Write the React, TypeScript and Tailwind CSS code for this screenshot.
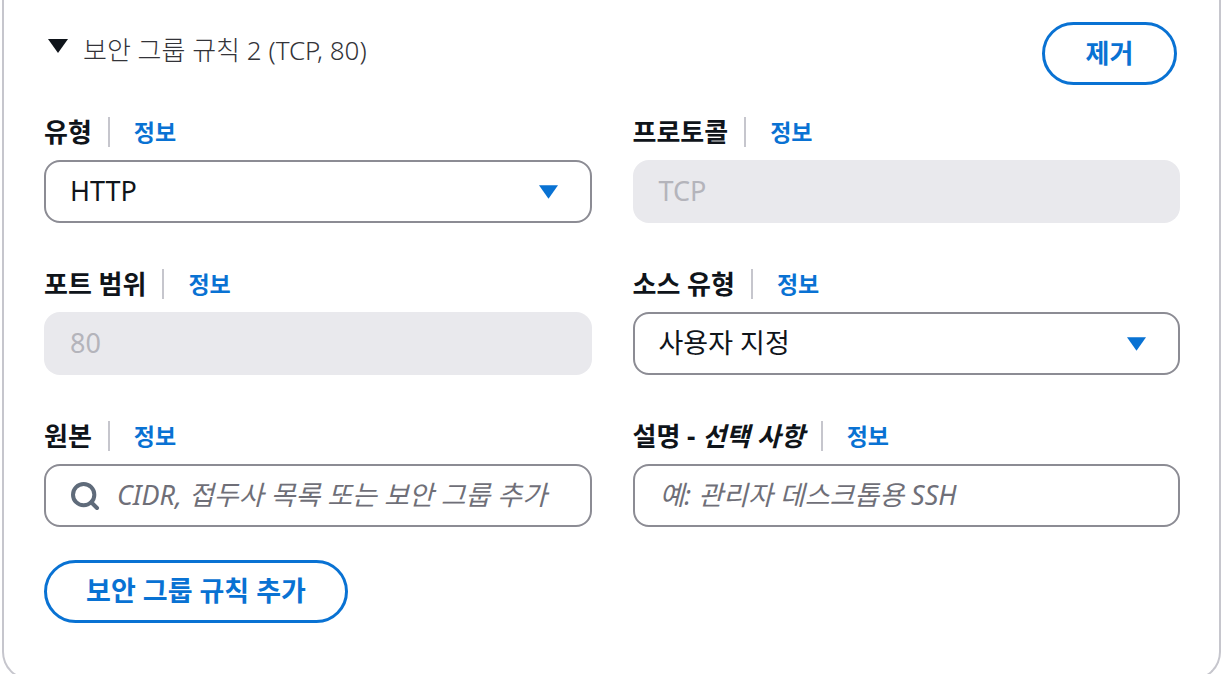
import { Search } from 'lucide-react'

const FONT = "font-['Noto_Sans','Noto_Sans_CJK_KR',sans-serif]"

function Caret({ className }: { className?: string }) {
  return (
    <svg viewBox="0 0 20 14" className={className} fill="currentColor">
      <path d="M0 0 H20 L10 14 Z" />
    </svg>
  )
}

function FieldLabel({ children }: { children: React.ReactNode }) {
  return (
    <div className="flex items-center h-[40px]">
      <span className="text-[26px] font-bold text-[#0f141a] leading-none">{children}</span>
      <span className="mx-[16px] w-[2px] h-[30px] bg-[#c6c6cd]" />
      <a className="ml-[8px] text-[23px] font-bold text-[#0972d3] leading-none">정보</a>
    </div>
  )
}

function Field({ label, children }: { label: React.ReactNode; children: React.ReactNode }) {
  return (
    <div className="flex flex-col gap-[8px]">
      <FieldLabel>{label}</FieldLabel>
      {children}
    </div>
  )
}

function SelectBox({ value }: { value: string }) {
  return (
    <div className="h-[63px] flex items-center justify-between pl-[24px] pr-[32px] border-2 border-[#8c8c94] rounded-[16px] bg-white">
      <span className="text-[27px] text-[#0f141a]">{value}</span>
      <Caret className="w-[19px] h-[14px] text-[#0972d3]" />
    </div>
  )
}

function DisabledBox({ value }: { value: string }) {
  return (
    <div className="h-[63px] flex items-center px-[26px] rounded-[16px] bg-[#e9e9ed]">
      <span className="text-[27px] text-[#b4b4bb]">{value}</span>
    </div>
  )
}

export default function App() {
  return (
    <div className={`${FONT} w-[1222px] h-[674px] bg-white overflow-hidden`}>
      <div className="ml-[2px] w-[1219px] h-[680px] border-x-2 border-b-2 border-[#c6c6cd] rounded-b-[28px] pl-[40px] pr-[39px] pt-[22px]">
        <div className="flex items-start justify-between">
          <div className="flex items-center gap-[15px] pl-[4px] pt-[9px]">
            <Caret className="w-[20px] h-[14px] text-[#0f141a] -mt-[10px]" />
            <span className="text-[26px] font-light text-[#333338]">보안 그룹 규칙 2 (TCP, 80)</span>
          </div>
          <button className="mr-[3px] w-[135px] h-[63px] rounded-full border-[3px] border-[#0972d3] text-[26px] font-bold text-[#0972d3]">
            제거
          </button>
        </div>

        <div className="mt-[27px] grid grid-cols-2 gap-x-[41px] gap-y-[41px]">
          <Field label="유형">
            <SelectBox value="HTTP" />
          </Field>
          <Field label="프로토콜">
            <DisabledBox value="TCP" />
          </Field>
          <Field label="포트 범위">
            <DisabledBox value="80" />
          </Field>
          <Field label="소스 유형">
            <SelectBox value="사용자 지정" />
          </Field>
          <Field label="원본">
            <div className="h-[63px] flex items-center gap-[16px] pl-[23px] pr-[20px] border-2 border-[#8c8c94] rounded-[16px] bg-white">
              <Search className="w-[32px] h-[32px] text-[#5f6b7a]" strokeWidth={3} />
              <span className="text-[27px] italic text-[#6f6f78] whitespace-nowrap">CIDR, 접두사 목록 또는 보안 그룹 추가</span>
            </div>
          </Field>
          <Field
            label={
              <>
                설명 - <i>선택 사항</i>
              </>
            }
          >
            <div className="h-[63px] flex items-center pl-[25px] border-2 border-[#8c8c94] rounded-[16px] bg-white">
              <span className="text-[27px] italic text-[#6f6f78]">예: 관리자 데스크톱용 SSH</span>
            </div>
          </Field>
        </div>

        <button className="mt-[33px] w-[304px] h-[63px] rounded-full border-[3px] border-[#0972d3] text-[27px] font-bold text-[#0972d3]">
          보안 그룹 규칙 추가
        </button>
      </div>
    </div>
  )
}
